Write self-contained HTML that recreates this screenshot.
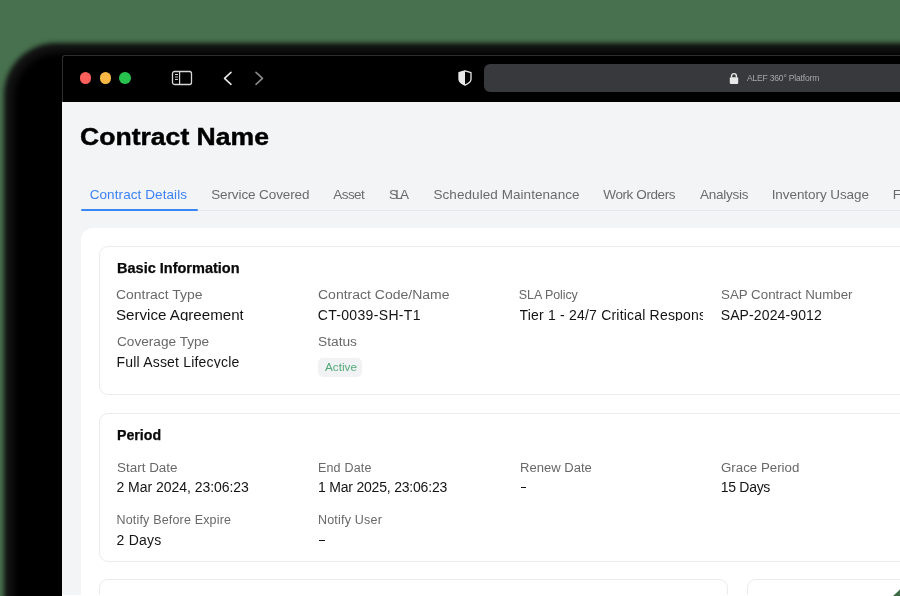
<!DOCTYPE html>
<html><head><meta charset="utf-8">
<style>
html,body{margin:0;padding:0}
body{width:900px;height:596px;overflow:hidden;position:relative;background:#48724f;font-family:"Liberation Sans",sans-serif}
.abs{position:absolute}
.t{position:absolute;white-space:nowrap;line-height:1}
#sh1{left:4px;top:43px;width:1100px;height:800px;border-radius:52px;background:#111;filter:blur(2.5px)}
#sh2{left:14px;top:53px;width:1100px;height:800px;border-radius:44px;background:#000;filter:blur(3px)}
#win{left:62px;top:55px;width:900px;height:600px;background:#000;border-top:1px solid #2e2e2e;border-left:1px solid #2e2e2e;border-top-left-radius:3px}
.dot{width:11.6px;height:11.6px;border-radius:50%;top:72.3px}
#content{left:62px;top:102px;width:900px;height:600px;background:#f3f4f6}
.panel{background:#fff;border-radius:12px}
.card{border:1px solid #ebebeb;border-radius:9px;background:#fff;box-sizing:border-box}
.clipcover{background:#fff}
</style></head><body>
<div id="sh1" class="abs"></div>
<div id="sh2" class="abs"></div>
<div id="win" class="abs"></div>
<div class="abs dot" style="left:79.8px;background:#fd5f5b"></div>
<div class="abs dot" style="left:99.6px;background:#f9b846"></div>
<div class="abs dot" style="left:119.2px;background:#27c24e"></div>
<!-- sidebar icon -->
<svg class="abs" style="left:170px;top:69px" width="24" height="18" viewBox="0 0 24 18">
  <rect x="2.5" y="2.5" width="19" height="13" rx="2" fill="none" stroke="#d8d8d8" stroke-width="1.3"/>
  <line x1="9.6" y1="2.5" x2="9.6" y2="15.5" stroke="#d8d8d8" stroke-width="1.2"/>
  <line x1="5" y1="5.5" x2="8" y2="5.5" stroke="#d8d8d8" stroke-width="1"/>
  <line x1="5" y1="8" x2="8" y2="8" stroke="#b8b8b8" stroke-width="1"/>
  <line x1="5" y1="10.4" x2="8" y2="10.4" stroke="#d8d8d8" stroke-width="1"/>
</svg>
<svg class="abs" style="left:220px;top:69px" width="16" height="18" viewBox="0 0 16 18">
  <polyline points="11,3.3 4.5,9.3 11,15.3" fill="none" stroke="#e6e6e6" stroke-width="1.6" stroke-linecap="round" stroke-linejoin="round"/>
</svg>
<svg class="abs" style="left:251px;top:69px" width="16" height="18" viewBox="0 0 16 18">
  <polyline points="5,3.3 11.5,9.3 5,15.3" fill="none" stroke="#8a8a8a" stroke-width="1.6" stroke-linecap="round" stroke-linejoin="round"/>
</svg>
<svg class="abs" style="left:456px;top:68px" width="18" height="20" viewBox="0 0 18 20">
  <path d="M9 2.8 L15 4.6 L15 11.3 C15 13.6 12.6 15.7 9 17.2 C5.4 15.7 3 13.6 3 11.3 L3 4.6 Z" fill="none" stroke="#e8e8e8" stroke-width="1.3" stroke-linejoin="round"/>
  <path d="M9 2.8 L3 4.6 L3 11.3 C3 13.6 5.4 15.7 9 17.2 Z" fill="#e8e8e8"/>
</svg>
<div class="abs" style="left:484px;top:64px;width:600px;height:28px;background:#38393d;border-radius:6px"></div>
<svg class="abs" style="left:729px;top:72px" width="10" height="13" viewBox="0 0 10 13">
  <path d="M2.6 5.5 V4 A2.4 2.4 0 0 1 7.4 4 V5.5" fill="none" stroke="#e8e8e8" stroke-width="1.4"/>
  <rect x="0.8" y="5.2" width="8.4" height="6.8" rx="1" fill="#e8e8e8"/>
</svg>
<div id="content" class="abs"></div>
<div class="abs" style="left:81px;top:210px;width:900px;height:1px;background:#e6e7ea"></div>
<div class="abs" style="left:81px;top:209px;width:117px;height:2px;background:#3b86f5;border-radius:1px"></div>
<div class="abs panel" style="left:81px;top:228px;width:900px;height:600px"></div>
<div class="abs card" style="left:99px;top:246px;width:900px;height:149px"></div>
<div class="abs" style="left:318px;top:357.5px;width:44px;height:19px;background:#f1f2f4;border-radius:5px"></div>
<div class="abs card" style="left:99px;top:413px;width:900px;height:149px"></div>
<div class="abs card" style="left:99px;top:579px;width:629px;height:200px"></div>
<div class="abs card" style="left:747px;top:579px;width:400px;height:200px"></div>
<div class="abs" style="left:0;top:0;width:900px;height:596px;will-change:transform"><div class="t" style="left:80.2px;top:125px;font-size:24.5px;font-weight:700;transform:scaleX(1.0844);transform-origin:0 0;color:#000;-webkit-text-stroke:0.45px #000">Contract Name</div>
<div class="t" style="left:89.7px;top:188px;font-size:13.5px;font-weight:400;letter-spacing:0.087px;color:#3b82f6">Contract Details</div>
<div class="t" style="left:211.2px;top:188px;font-size:13.5px;font-weight:400;letter-spacing:-0.107px;color:#6b6b6b">Service Covered</div>
<div class="t" style="left:333.3px;top:188px;font-size:13.5px;font-weight:400;letter-spacing:-0.575px;color:#6b6b6b">Asset</div>
<div class="t" style="left:389.0px;top:188px;font-size:13.5px;font-weight:400;letter-spacing:-2.8px;color:#6b6b6b">SLA</div>
<div class="t" style="left:433.5px;top:188px;font-size:13.5px;font-weight:400;letter-spacing:0.06px;color:#6b6b6b">Scheduled Maintenance</div>
<div class="t" style="left:603.3px;top:188px;font-size:13.5px;font-weight:400;letter-spacing:-0.4px;color:#6b6b6b">Work Orders</div>
<div class="t" style="left:700.0px;top:188px;font-size:13.5px;font-weight:400;letter-spacing:-0.243px;color:#6b6b6b">Analysis</div>
<div class="t" style="left:771.7px;top:188px;font-size:13.5px;font-weight:400;letter-spacing:-0.071px;color:#6b6b6b">Inventory Usage</div>
<div class="t" style="left:116.5px;top:261px;font-size:14px;font-weight:700;transform:scaleX(1.0368);transform-origin:0 0;color:#0a0a0a;-webkit-text-stroke:0.25px #0a0a0a">Basic Information</div>
<div class="t" style="left:116.4px;top:289px;font-size:12.5px;font-weight:400;transform:scaleX(1.1132);transform-origin:0 0;color:#686868;-webkit-text-stroke:0px #686868">Contract Type</div>
<div class="t" style="left:116.4px;top:308px;font-size:14px;font-weight:400;transform:scaleX(1.0803);transform-origin:0 0;color:#141414;-webkit-text-stroke:0px #141414;height:12.8px;overflow:hidden">Service Agreement</div>
<div class="t" style="left:116.5px;top:336px;font-size:12.5px;font-weight:400;transform:scaleX(1.0904);transform-origin:0 0;color:#686868;-webkit-text-stroke:0px #686868">Coverage Type</div>
<div class="t" style="left:116.5px;top:355px;font-size:14px;font-weight:400;letter-spacing:0.195px;color:#141414;height:12.6px;overflow:hidden">Full Asset Lifecycle</div>
<div class="t" style="left:317.7px;top:289px;font-size:12.5px;font-weight:400;transform:scaleX(1.1207);transform-origin:0 0;color:#686868;-webkit-text-stroke:0px #686868">Contract Code/Name</div>
<div class="t" style="left:317.7px;top:308px;font-size:14px;font-weight:400;letter-spacing:0.333px;color:#141414">CT-0039-SH-T1</div>
<div class="t" style="left:317.8px;top:336px;font-size:12.5px;font-weight:400;transform:scaleX(1.1);transform-origin:0 0;color:#686868;-webkit-text-stroke:0px #686868">Status</div>
<div class="t" style="left:518.8px;top:289px;font-size:12.5px;font-weight:400;letter-spacing:-0.078px;color:#686868">SLA Policy</div>
<div class="t" style="left:720.7px;top:289px;font-size:12.5px;font-weight:400;transform:scaleX(1.0656);transform-origin:0 0;color:#686868;-webkit-text-stroke:0px #686868">SAP Contract Number</div>
<div class="t" style="left:720.7px;top:308px;font-size:14px;font-weight:400;letter-spacing:0.125px;color:#141414">SAP-2024-9012</div>
<div class="t" style="left:116.5px;top:428px;font-size:14px;font-weight:700;transform:scaleX(1.0119);transform-origin:0 0;color:#0a0a0a;-webkit-text-stroke:0.25px #0a0a0a">Period</div>
<div class="t" style="left:116.5px;top:462px;font-size:12.5px;font-weight:400;transform:scaleX(1.0764);transform-origin:0 0;color:#686868;-webkit-text-stroke:0px #686868">Start Date</div>
<div class="t" style="left:116.5px;top:480px;font-size:14px;font-weight:400;letter-spacing:-0.037px;color:#141414">2 Mar 2024, 23:06:23</div>
<div class="t" style="left:116.5px;top:514px;font-size:12.5px;font-weight:400;letter-spacing:0.174px;color:#686868">Notify Before Expire</div>
<div class="t" style="left:116.5px;top:533px;font-size:14px;font-weight:400;letter-spacing:0.26px;color:#141414">2 Days</div>
<div class="t" style="left:317.9px;top:462px;font-size:12.5px;font-weight:400;letter-spacing:0.214px;color:#686868">End Date</div>
<div class="t" style="left:317.9px;top:480px;font-size:14px;font-weight:400;letter-spacing:-0.195px;color:#141414">1 Mar 2025, 23:06:23</div>
<div class="t" style="left:317.9px;top:514px;font-size:12.5px;font-weight:400;letter-spacing:0.22px;color:#686868">Notify User</div>
<div class="t" style="left:519.7px;top:462px;font-size:12.5px;font-weight:400;transform:scaleX(1.0448);transform-origin:0 0;color:#686868;-webkit-text-stroke:0px #686868">Renew Date</div>
<div class="t" style="left:720.7px;top:462px;font-size:12.5px;font-weight:400;transform:scaleX(1.0639);transform-origin:0 0;color:#686868;-webkit-text-stroke:0px #686868">Grace Period</div>
<div class="t" style="left:720.7px;top:480px;font-size:14px;font-weight:400;letter-spacing:-0.283px;color:#141414">15 Days</div>
<div class="t" style="left:324.7px;top:362px;font-size:10.5px;font-weight:400;transform:scaleX(1.1179);transform-origin:0 0;color:#52a97a;-webkit-text-stroke:0px #52a97a">Active</div>
<div class="t" style="left:747.0px;top:74px;font-size:8.5px;font-weight:400;letter-spacing:-0.176px;color:#a8a8aa">ALEF 360° Platform</div>
<div class="t" style="left:519.5px;top:308px;font-size:14px;letter-spacing:0.2px;color:#141414;width:183.7px;height:12.8px;overflow:hidden">Tier 1 - 24/7 Critical Response</div>
<div class="t" style="left:892.8px;top:188px;font-size:13.5px;color:#6b6b6b">F</div>
<div class="abs" style="left:520.7px;top:486.8px;width:5.5px;height:1.3px;background:#141414"></div>
<div class="abs" style="left:319px;top:539.8px;width:5.9px;height:1.3px;background:#141414"></div></div>
<div class="abs" style="left:62px;top:595px;width:838px;height:1px;background:#fff"></div>
<svg class="abs" style="left:0;top:0" width="900" height="596"><polygon points="893,596 900,589.5 900,596" fill="#3f6b46"/></svg>
</body></html>
